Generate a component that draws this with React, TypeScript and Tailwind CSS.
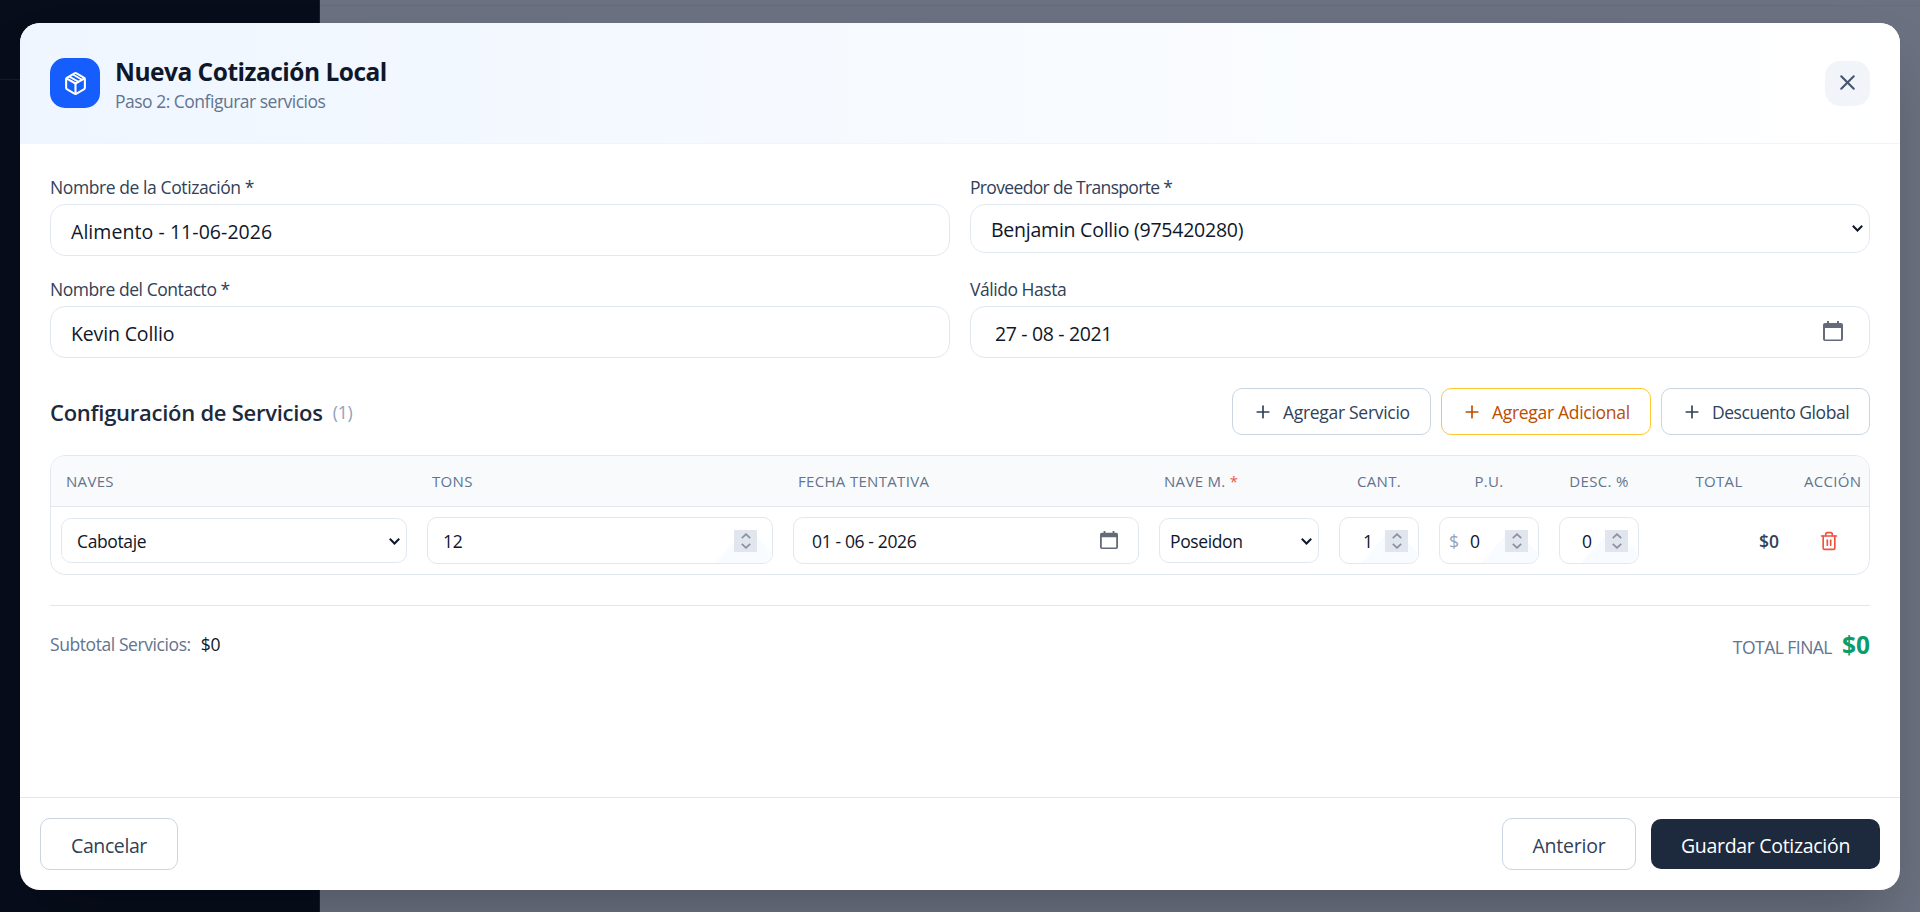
import React from 'react';
import { Plus, Trash2, X } from 'lucide-react';

const BoxIcon: React.FC = () => (
  <svg
    className="w-[25px] h-[25px]"
    viewBox="0 0 24 24"
    fill="none"
    stroke="currentColor"
    strokeWidth="2"
    strokeLinecap="round"
    strokeLinejoin="round"
  >
    <path d="M11 21.73a2 2 0 0 0 2 0l7-4A2 2 0 0 0 21 16V8a2 2 0 0 0-1-1.73l-7-4a2 2 0 0 0-2 0l-7 4A2 2 0 0 0 3 8v8a2 2 0 0 0 1 1.73z" />
    <path d="M3.3 7 12 12l8.7-5" />
    <path d="M12 22V12" />
    <path d="m6.2 5.4 8.2 4.7M10 3.6l8.2 4.7" strokeWidth="1.7" />
  </svg>
);

const SelectArrow: React.FC = () => (
  <svg className="w-[11px] h-[7px] shrink-0" viewBox="0 0 11 7" fill="none" stroke="#0f172a" strokeWidth="2">
    <path d="M.8.8 5.5 5.5 10.2.8" />
  </svg>
);

const CalendarIcon: React.FC<{ className: string }> = ({ className }) => (
  <svg className={className} viewBox="0 0 20 20" fill="#646a77">
    <path
      fillRule="evenodd"
      d="M4 0h2v2h8V0h2v2h2a2 2 0 0 1 2 2v14a2 2 0 0 1-2 2H2a2 2 0 0 1-2-2V4a2 2 0 0 1 2-2h2zM2 7v11.4h16V7z"
    />
  </svg>
);

// Number field with its stepper
const NumberBox: React.FC<{ value: string; className: string; prefix?: string }> = ({ value, className, prefix }) => (
  <div className={`relative flex h-[47px] items-center rounded-[10px] border border-[#e2e8f0] overflow-hidden ${className}`}>
    <div className="absolute right-0 bottom-0 h-8 w-[57px] bg-[#f8fbff] [clip-path:polygon(0_100%,50%_0,65%_0,100%_70%,100%_100%)]" />
    {prefix && <span className="pt-0.5 text-[#94a3b8]">{prefix}</span>}
    <span className="flex-1 pt-0.5 tracking-[-0.2px]">{value}</span>
    <div className="relative flex h-[22px] w-[23px] items-center justify-center bg-[#e1e5ee]">
      <svg className="h-4 w-[10px]" viewBox="0 0 10 16" fill="none" stroke="#8b919e" strokeWidth="1.8">
        <path d="M.8 5.2 5 1.2l4.2 4M.8 10.8l4.2 4 4.2-4" />
      </svg>
    </div>
  </div>
);

const SelectBox: React.FC<{ value: string; className: string }> = ({ value, className }) => (
  <div className={`flex h-[45px] items-center justify-between rounded-[10px] border border-[#e2e8f0] pt-px pr-[6px] ${className}`}>
    <span className="pt-px tracking-[-0.38px]">{value}</span>
    <SelectArrow />
  </div>
);

const Field: React.FC<{ label: string; labelClass: string; children: React.ReactNode }> = ({ label, labelClass, children }) => (
  <div className="h-[82px]">
    <div className={`h-[30px] pt-px text-[17.5px] leading-[25px] text-[#314158] ${labelClass}`}>{label}</div>
    {children}
  </div>
);

const App: React.FC = () => {
  return (
    <div className="relative flex h-[912px] w-[1920px] overflow-hidden bg-[#6b7180] font-['Open_Sans','Segoe_UI',sans-serif] text-[#0f172a]">
      {/* Dimmed page behind the dialog */}
      <aside className="w-[320px] border-r border-[#151b31] bg-[#070d1b]">
        <div className="h-20 border-b border-[#131b2f]" />
      </aside>
      <main className="flex-1">
        <div className="h-1.5 border-b border-[#666c7a]" />
      </main>

      {/* Dialog */}
      <div className="absolute inset-0 flex px-5 pt-[23px] pb-[22px]">
        <div className="flex flex-1 flex-col overflow-hidden rounded-[20px] bg-white shadow-[0_31px_62px_-15px_rgba(0,0,0,0.25)]">
          {/* Header */}
          <header className="flex h-[121px] items-center justify-between border-b border-[#f1f5f9] bg-linear-to-r from-[#eff6ff] to-white px-[30px]">
            <div className="flex items-center gap-[15px]">
              <div className="flex h-[50px] w-[50px] items-center justify-center rounded-[15px] bg-[#155dfc] text-white">
                <BoxIcon />
              </div>
              <div>
                <h1 className="h-[35px] pt-px text-[24.5px] leading-[35px] font-bold tracking-[-0.5px]">Nueva Cotización Local</h1>
                <p className="h-[25px] pt-px text-[17.5px] leading-[25px] tracking-[-0.5px] text-[#62748e]">Paso 2: Configurar servicios</p>
              </div>
            </div>
            <button className="flex h-[45px] w-[45px] items-center justify-center rounded-[15px] bg-[#f1f5f9] pb-px text-[#45556c]">
              <X className="h-[25px] w-[25px]" />
            </button>
          </header>

          {/* Body */}
          <div className="flex-1 px-[30px] pt-[30px]">
            <div className="grid grid-cols-2 gap-5 text-[19.5px]">
              <Field label="Nombre de la Cotización *" labelClass="tracking-[-0.41px]">
                <div className="flex h-[52px] items-center rounded-[15px] border border-[#e2e8f0] px-5 pt-[3px] tracking-[0.06px]">Alimento - 11-06-2026</div>
              </Field>
              <Field label="Proveedor de Transporte *" labelClass="tracking-[-0.66px]">
                <div className="flex h-[49px] items-center justify-between rounded-[15px] border border-[#e2e8f0] pr-[6px] pl-5">
                  <span className="pt-0.5 tracking-[-0.24px]">Benjamin Collio (975420280)</span>
                  <SelectArrow />
                </div>
              </Field>
              <Field label="Nombre del Contacto *" labelClass="tracking-[-0.45px]">
                <div className="flex h-[52px] items-center rounded-[15px] border border-[#e2e8f0] px-5 pt-[3px] tracking-[-0.15px]">Kevin Collio</div>
              </Field>
              <Field label="Válido Hasta" labelClass="tracking-[-0.45px]">
                <div className="flex h-[52px] items-center justify-between rounded-[15px] border border-[#e2e8f0] pr-[26px] pl-6">
                  <span className="pt-[3px] tracking-[-0.35px]">27 - 08 - 2021</span>
                  <CalendarIcon className="mb-0.5 h-5 w-5" />
                </div>
              </Field>
            </div>

            <div className="mt-[30px] flex h-[47px] items-center justify-between">
              <h2 className="flex items-center gap-[10px] pt-px text-[22px] font-semibold tracking-[-0.26px] text-[#1d293d]">
                Configuración de Servicios
                <span className="text-[17.5px] font-normal text-[#90a1b9]">(1)</span>
              </h2>
              <div className="flex gap-[10px] text-[17.5px] text-[#314158]">
                <button className="flex h-[47px] w-[199px] items-center gap-[10px] rounded-[10px] border border-[#cad5e2] pl-5">
                  <Plus className="h-5 w-5" />
                  <span className="pt-0.5 tracking-[-0.3px] whitespace-nowrap">Agregar Servicio</span>
                </button>
                <button className="flex h-[47px] w-[210px] items-center gap-[10px] rounded-[10px] border border-[#fdc82f] pl-5 text-[#bb4d00]">
                  <Plus className="h-5 w-5" />
                  <span className="pt-0.5 tracking-[-0.3px] whitespace-nowrap">Agregar Adicional</span>
                </button>
                <button className="flex h-[47px] w-[209px] items-center gap-[10px] rounded-[10px] border border-[#cad5e2] pl-5">
                  <Plus className="h-5 w-5" />
                  <span className="pt-0.5 tracking-[-0.45px] whitespace-nowrap">Descuento Global</span>
                </button>
              </div>
            </div>

            {/* Services table */}
            <div className="mt-5 overflow-hidden rounded-[15px] border border-[#e2e8f0]">
              <div className="grid h-[51px] grid-cols-[366px_366px_366px_180px_100px_120px_100px_140px_80px] items-center border-b border-[#e2e8f0] bg-[#f8fafc] pt-px text-[15px] tracking-[0.32px] whitespace-nowrap text-[#62748e]">
                <div className="pl-[15px]">NAVES</div>
                <div className="pl-[15px]">TONS</div>
                <div className="pl-[15px]">FECHA TENTATIVA</div>
                <div className="pl-[15px]">NAVE M. <span className="text-[#ef5440]">*</span></div>
                <div className="text-center">CANT.</div>
                <div className="text-center">P.U.</div>
                <div className="text-center">DESC. %</div>
                <div className="text-center">TOTAL</div>
                <div className="pl-[15px]">ACCIÓN</div>
              </div>
              <div className="grid h-[67px] grid-cols-[366px_366px_366px_180px_100px_120px_100px_140px_80px] items-center text-[17.5px]">
                <SelectBox value="Cabotaje" className="mx-[10px] pl-[15px]" />
                <NumberBox value="12" className="mx-[10px] pr-[15px] pl-[15px]" />
                <div className="mx-[10px] flex h-[47px] items-center justify-between rounded-[10px] border border-[#e2e8f0] pr-5 pl-[18px]">
                  <span className="pt-0.5 tracking-[-0.37px]">01 - 06 - 2026</span>
                  <CalendarIcon className="mb-0.5 h-[18px] w-[18px]" />
                </div>
                <SelectBox value="Poseidon" className="mx-[10px] pl-[10px]" />
                <NumberBox value="1" className="mx-[10px] pr-[10px] pl-[23px]" />
                <NumberBox value="0" prefix="$" className="mx-[10px] gap-[11px] pr-[10px] pl-[9px]" />
                <NumberBox value="0" className="mx-[10px] pr-[10px] pl-[22px]" />
                <div className="pt-px pr-[10px] text-right font-semibold text-[#314158]">$0</div>
                <button className="flex justify-center text-[#ef5440]">
                  <Trash2 className="h-5 w-5" />
                </button>
              </div>
            </div>

            {/* Totals */}
            <div className="mt-[30px] flex items-center justify-between border-t border-[#e2e8f0] pt-5">
              <div className="flex gap-[10px] pt-px text-[17.5px] leading-[25px]">
                <span className="tracking-[-0.42px] text-[#62748e]">Subtotal Servicios:</span>
                <span className="tracking-[-0.3px]">$0</span>
              </div>
              <div className="flex items-baseline gap-[10px] pt-px">
                <span className="text-[17.5px] tracking-[-0.53px] text-[#62748e]">TOTAL FINAL</span>
                <span className="text-[24.5px] leading-[35px] font-bold text-[#0a9c6b]">$0</span>
              </div>
            </div>
          </div>

          {/* Footer */}
          <footer className="flex h-[93px] items-center justify-between border-t border-[#e2e8f0] px-5 text-[19.5px] text-[#314158]">
            <button className="h-[52px] w-[138px] rounded-[10px] border border-[#cad5e2] pt-[3px] tracking-[-0.4px]">Cancelar</button>
            <div className="flex items-center gap-[15px]">
              <button className="h-[52px] w-[134px] rounded-[10px] border border-[#cad5e2] pt-[3px] tracking-[-0.2px]">Anterior</button>
              <button className="h-[50px] w-[229px] rounded-[10px] bg-[#1d293d] pt-[3px] tracking-[-0.3px] text-white">Guardar Cotización</button>
            </div>
          </footer>
        </div>
      </div>
    </div>
  );
};

export default App;
